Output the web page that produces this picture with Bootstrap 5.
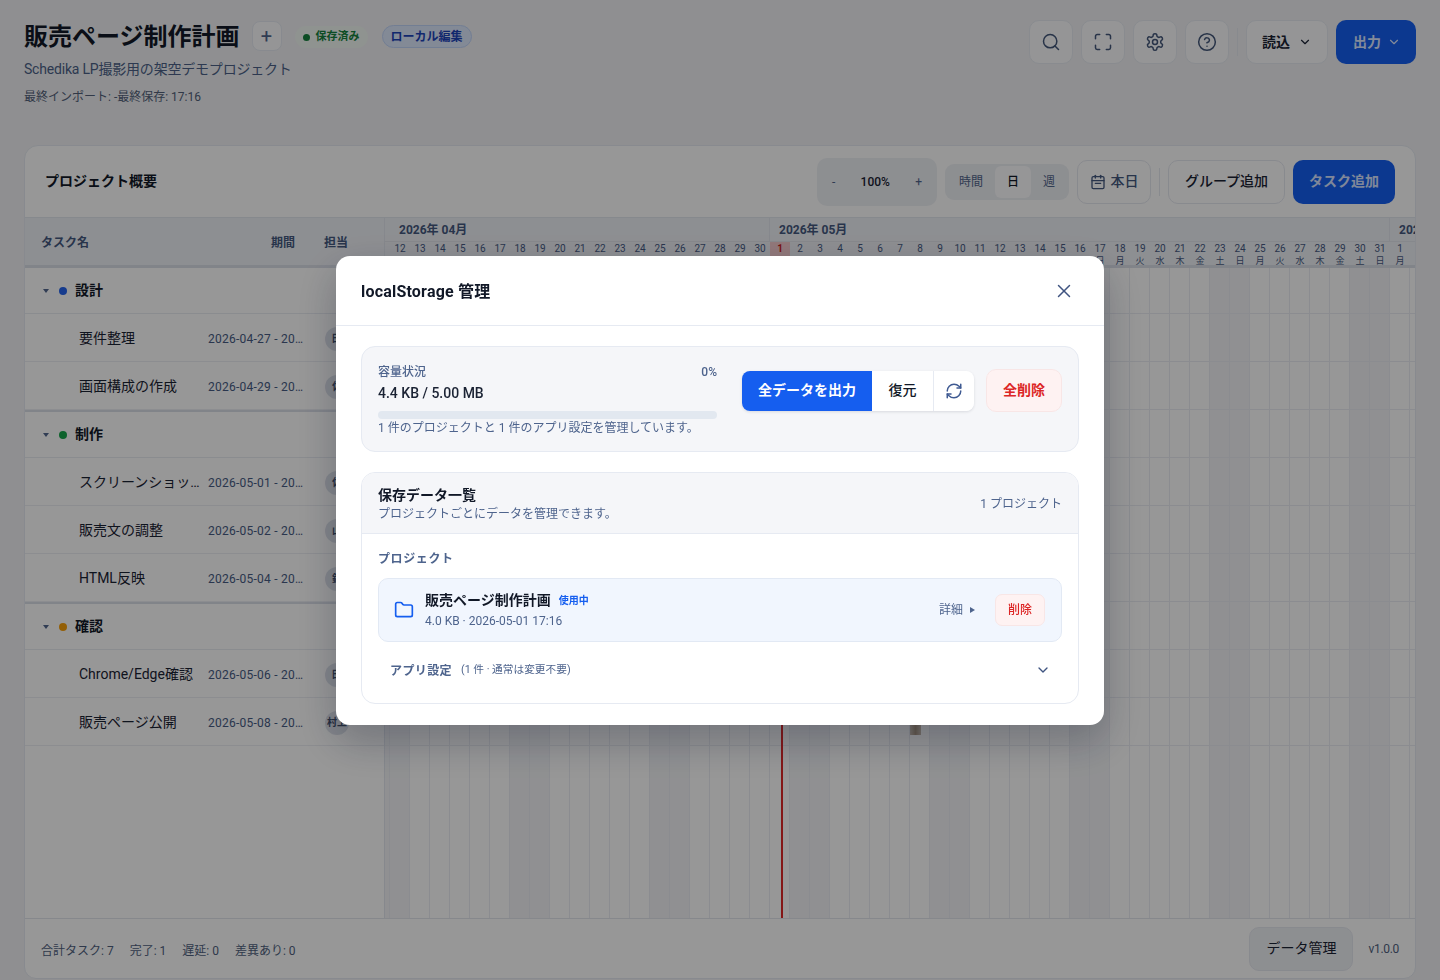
<!DOCTYPE html>
<html lang="ja">
<head>
<meta charset="UTF-8">
<meta name="viewport" content="width=device-width, initial-scale=1.0">
<title>販売ページ制作計画</title>
<link href="https://cdn.jsdelivr.net/npm/bootstrap@5.3.1/dist/css/bootstrap.min.css" rel="stylesheet">
<style>
    body {
        height: 100vh;
        overflow: hidden;
        background: #eeeff2;
        color: #111827;
        font-family: Roboto, "Noto Sans CJK JP", sans-serif;
    }
    svg.ico { fill: none; stroke: currentColor; stroke-width: 2; stroke-linecap: round; stroke-linejoin: round; flex: none; }

    /* page head */
    .page-wrap { height: 100vh; padding: 0 24px 1px; }
    .page-head { flex: 0 0 145px; padding-top: 19px; }
    .head-title-row { height: 34px; margin-top: 1px; }
    .page-title { font-size: 24px; font-weight: 700; line-height: 34px; margin: 0; }
    .add-tab { width: 30px; height: 30px; border: 1px solid #e3e7ef; border-radius: 8px; background: #f8f9fb; color: #51648a; font-size: 20px; line-height: 1; margin: 0 0 2px 12px; }
    .saved-pill { font-size: 11px; font-weight: 700; color: #15803d; padding: 3px 8px; margin-left: 13px; background: #eff5f1; border-radius: 12px; gap: 6px; }
    .saved-dot { width: 7px; height: 7px; border-radius: 50%; background: #15803d; }
    .local-pill { font-size: 12px; font-weight: 700; color: #1d44b8; background: #dbe6fb; border: 1px solid #bfd2f5; border-radius: 12px; padding: 2px 8px; margin: 0 0 2px 14px; height: 23px; line-height: 18px; }
    .page-sub { font-size: 14px; color: #4b5f86; line-height: 20px; margin-top: 5px; letter-spacing: -.2px; }
    .page-meta { font-size: 12px; color: #526078; line-height: 18px; margin-top: 9px; }
    .head-tools { margin-top: 1px; }
    .icon-btn { width: 44px; height: 44px; border: 1px solid #e5e8ef; border-radius: 10px; background: #f8f9fb; color: #435678; }
    .icon-btn svg.ico { stroke-width: 1.8; }
    .head-sep { width: 1px; height: 28px; background: #e3e6ed; }
    .head-btn { height: 44px; border-radius: 10px; font-size: 14px; font-weight: 700; padding: 0; gap: 8px; }
    .head-btn.plain { width: 82px; background: #f8f9fb; border: 1px solid #e5e8ef; color: #1a2233; }
    .head-btn.blue { width: 80px; background: #155eef; color: #dbe6ff; border: 0; gap: 6px; padding-left: 2px; }

    /* main card */
    .plan-card { border: 1px solid #e3e7ee; border-radius: 14px 14px 12px 12px; background: #fcfcfc; overflow: hidden; min-height: 0; }
    .plan-bar { height: 71px; padding: 0 20px; flex: none; }
    .plan-name { font-size: 14px; font-weight: 700; }
    .zoom-box { width: 120px; height: 48px; background: #eceef2; border-radius: 10px; font-size: 12px; color: #51648a; padding: 0 15px; }
    .zoom-box b { font-weight: 500; color: #1a2233; }
    .seg-box { width: 124px; height: 36px; background: #eceef2; border-radius: 9px; padding: 2px 0 2px 8px; font-size: 12px; color: #51648a; margin-left: 8px; gap: 6px; }
    .seg-box span { width: 36px; text-align: center; line-height: 32px; }
    .seg-box span:last-child { width: 24px; }
    .seg-box .on { background: #fafafc; border-radius: 6px; color: #111827; font-weight: 500; }
    .tool-btn { height: 44px; border: 1px solid #e3e6ed; border-radius: 10px; background: #fcfcfc; font-size: 14px; font-weight: 500; color: #1a2233; gap: 5px; }
    .tool-btn.today { width: 74px; color: #44587e; }
    .tool-btn.group { width: 117px; }
    .tool-sep { width: 1px; height: 28px; background: #e3e6ed; margin: 0 8px; }
    .blue-btn { height: 44px; width: 102px; border-radius: 10px; background: #155eef; color: #d6e2ff; font-size: 14px; font-weight: 700; margin-left: 8px; }

    /* left table */
    .plan-main { flex: 1; min-height: 0; border-top: 1px solid #e0e4ec; }
    .task-side { width: 360px; flex: none; border-right: 1px solid #dfe3eb; }
    .side-head { height: 50px; background: #eceef3; font-size: 12px; font-weight: 700; color: #44587e; border-bottom: 3px solid #d8dce5; padding: 3px 0 0 16px; }
    .side-head span:nth-child(1) { width: 230px; }
    .side-head span:nth-child(2) { width: 53px; }
    .row-group { height: 46px; padding-left: 18px; border-bottom: 1px solid #e6e9ef; font-size: 14px; font-weight: 700; }
    .row-group.next { height: 48px; border-top: 2px solid #d8dce5; }
    .group-caret { width: 0; height: 0; border-left: 3.5px solid transparent; border-right: 3.5px solid transparent; border-top: 4.5px solid #52668c; }
    .group-dot { width: 8px; height: 8px; border-radius: 50%; margin: 0 8px 0 10px; }
    .row-task { height: 48px; padding: 2px 0 0 54px; border-bottom: 1px solid #e9ebf0; }
    .task-name { width: 123px; font-size: 14px; color: #1a2233; }
    .task-date { width: 97px; margin-left: 6px; font-size: 12px; color: #465a82; letter-spacing: .25px; }
    .task-who { width: 24px; height: 24px; border-radius: 50%; background: #dbdfe7; color: #3e4d69; font-size: 10px; font-weight: 700; margin-left: 20px; white-space: nowrap; overflow: hidden; flex: none; }

    /* timeline */
    .time-side { flex: 1; min-width: 0; overflow: hidden; }
    .time-track { width: 1045px; margin-left: -15px; position: relative; height: 100%; }
    .month-row { height: 24px; background: #eceef3; border-bottom: 1px solid #e0e3ea; }
    .month-cell { height: 100%; font-size: 12px; font-weight: 700; color: #44587e; padding: 3px 0 0 9px; border-right: 1px solid #dfe3eb; white-space: nowrap; overflow: hidden; flex: none; }
    .month-cell.apr { width: 400px; padding-left: 29px; }
    .month-cell.may { width: 620px; }
    .month-cell.jun { width: 25px; border: 0; }
    .day-row { background: #eceef3; height: 26px; border-bottom: 3px solid #d8dce5; }
    .day-cell { width: 20px; flex: none; text-align: center; font-size: 10px; line-height: 14px; color: #465a82; }
    .day-cell i { display: block; font-style: normal; font-size: 9px; line-height: 9px; margin-top: 1px; }
    .day-cell u { display: block; text-decoration: none; }
    .day-cell.now u { background: #f3c9cc; color: #c81e1e; font-weight: 700; }
    .grid-area { height: 651px; position: relative; }
    .grid-col { width: 20px; flex: none; border-right: 1px solid #e8eaf0; }
    .grid-col.off { background: #f0f1f4; }
    .grid-lines { position: absolute; left: 0; right: 0; top: -2px; }
    .grid-lines div { height: 48px; border-bottom: 1px solid #e8eaf0; }
    .today-line { position: absolute; left: 411px; top: 0; bottom: 0; width: 2px; background: #dc2626; }
    .mini-bar { position: absolute; left: 540px; top: 455px; width: 11px; height: 12px; background: linear-gradient(90deg, #c9bdb0, #a8957f, #c9bdb0); }

    /* footer */
    .plan-foot { height: 60px; flex: none; border-top: 1px solid #dfe3ea; padding: 0 16px; font-size: 12px; color: #4f5f7d; }
    .foot-stats { padding-top: 4px; }
    .foot-ver { padding-top: 1px; letter-spacing: -.3px; }
    .foot-btn { height: 44px; width: 104px; margin-right: 15px; background: #eceef2; border: 1px solid #e3e6ed; border-radius: 10px; font-size: 14px; color: #1a2233; }

    /* storage dialog */
    .modal-backdrop.show { opacity: .4; }
    .store-dialog { max-width: 768px; }
    .store-dialog .modal-content { border: 0; border-radius: 14px; box-shadow: 0 16px 40px rgba(15, 23, 42, .28); }
    .store-dialog .modal-header { height: 70px; padding: 3px 25px 0; border-bottom: 1px solid #e6eaf2; }
    .store-title { font-size: 16px; font-weight: 700; margin: 0; letter-spacing: .2px; }
    .close-x { color: #3f5480; background: none; border: 0; padding: 0; margin: 0 4px 2px 0; }
    .close-x svg.ico { stroke-width: 1.6; }
    .store-dialog .modal-body { padding: 20px 25px 21px; }
    .quota-panel { height: 106px; background: #f5f6f9; border: 1px solid #e6eaf2; border-radius: 14px; padding: 0 16px; }
    .quota-left { width: 339px; padding-top: 2px; }
    .soft-text { color: #4e648d; font-size: 12px; }
    .quota-label { font-weight: 500; line-height: 18px; }
    .quota-size { font-size: 14px; font-weight: 500; line-height: 20px; margin-top: 2px; color: #1a2233; }
    .quota-track { height: 8px; background: #e2e8f0; border-radius: 4px; margin-top: 8px; }
    .quota-note { line-height: 16px; margin-top: 1px; }
    .act-group { height: 40px; border-radius: 8px; box-shadow: 0 1px 3px rgba(15, 23, 42, .12); margin: 0 0 16px 25px; overflow: hidden; }
    .act-group button { height: 40px; border: 0; font-size: 14px; font-weight: 700; background: #fff; padding: 0; }
    .act-export { width: 130px; background: #155eef !important; color: #fff; }
    .act-group .act-restore { width: 61px; color: #111827; font-weight: 500; }
    .act-sync { width: 41px; border-left: 1px solid #e6eaf2 !important; color: #3f5a92; }
    .act-clear { width: 76px; height: 43px; margin: 0 0 16px 12px; background: #fef2f2; border: 1px solid #f8e6e6; border-radius: 10px; color: #dc2626; font-size: 14px; font-weight: 700; }
    .saved-panel { margin-top: 20px; border: 1px solid #e6eaf2; border-radius: 14px; height: 232px; overflow: hidden; }
    .saved-top { height: 61px; background: #f5f6f9; border-bottom: 1px solid #e6eaf2; padding: 0 16px; }
    .saved-head { padding-top: 2px; }
    .saved-name { font-size: 14px; font-weight: 700; line-height: 18px; }
    .saved-hint { line-height: 16px; margin-top: 2px; }
    .saved-count { margin-top: 2px; }
    .saved-body { padding: 16px 16px 0; }
    .saved-cap { font-size: 12px; font-weight: 700; color: #4e648d; letter-spacing: .05em; line-height: 18px; }
    .proj-item { height: 64px; margin-top: 10px; background: #f1f6fe; border: 1px solid #e2e9f4; border-radius: 10px; padding: 0 16px 0 15px; }
    .proj-ico { color: #155eef; margin-right: 11px; }
    .proj-name { font-size: 14px; font-weight: 700; line-height: 18px; color: #111827; }
    .proj-live { font-size: 10px; font-weight: 700; color: #155eef; margin-left: 8px; }
    .proj-text { padding-top: 1px; }
    .proj-sub { line-height: 16px; margin-top: 4px; }
    .proj-more { font-size: 12px; color: #4e648d; margin-right: 20px; }
    .proj-more i { display: inline-block; width: 0; height: 0; border-top: 3px solid transparent; border-bottom: 3px solid transparent; border-left: 5px solid #4e648d; margin-left: 7px; vertical-align: 1px; }
    .proj-del { width: 50px; height: 32px; background: #fef2f2; border: 1px solid #f8e6e6; border-radius: 7px; color: #dc2626; font-size: 12px; font-weight: 500; }
    .app-row { padding: 20px 11px 0 12px; }
    .app-cap { font-size: 12px; font-weight: 700; color: #4e648d; letter-spacing: .4px; }
    .app-note { font-size: 10.7px; color: #4e648d; margin-left: 9px; }
    .app-arrow { color: #3f5480; margin-top: -2px; }
</style>
</head>
<body>
<svg width="0" height="0" class="position-absolute">
    <symbol id="i-search" viewBox="0 0 24 24"><circle cx="11" cy="11" r="8"/><path d="m21 21-4.3-4.3"/></symbol>
    <symbol id="i-full" viewBox="0 0 24 24"><path d="M8 3H5a2 2 0 0 0-2 2v3"/><path d="M21 8V5a2 2 0 0 0-2-2h-3"/><path d="M3 16v3a2 2 0 0 0 2 2h3"/><path d="M16 21h3a2 2 0 0 0 2-2v-3"/></symbol>
    <symbol id="i-gear" viewBox="0 0 24 24"><path d="M12.22 2h-.44a2 2 0 0 0-2 2v.18a2 2 0 0 1-1 1.73l-.43.25a2 2 0 0 1-2 0l-.15-.08a2 2 0 0 0-2.73.73l-.22.38a2 2 0 0 0 .73 2.73l.15.1a2 2 0 0 1 1 1.72v.51a2 2 0 0 1-1 1.74l-.15.09a2 2 0 0 0-.73 2.73l.22.38a2 2 0 0 0 2.73.73l.15-.08a2 2 0 0 1 2 0l.43.25a2 2 0 0 1 1 1.73V20a2 2 0 0 0 2 2h.44a2 2 0 0 0 2-2v-.18a2 2 0 0 1 1-1.73l.43-.25a2 2 0 0 1 2 0l.15.08a2 2 0 0 0 2.73-.73l.22-.39a2 2 0 0 0-.73-2.73l-.15-.08a2 2 0 0 1-1-1.74v-.5a2 2 0 0 1 1-1.74l.15-.09a2 2 0 0 0 .73-2.73l-.22-.38a2 2 0 0 0-2.73-.73l-.15.08a2 2 0 0 1-2 0l-.43-.25a2 2 0 0 1-1-1.73V4a2 2 0 0 0-2-2z"/><circle cx="12" cy="12" r="3"/></symbol>
    <symbol id="i-help" viewBox="0 0 24 24"><circle cx="12" cy="12" r="10"/><path d="M9.09 9a3 3 0 0 1 5.83 1c0 2-3 3-3 3"/><path d="M12 17h.01"/></symbol>
    <symbol id="i-down" viewBox="0 0 24 24"><path d="m6 9 6 6 6-6"/></symbol>
    <symbol id="i-cal" viewBox="0 0 24 24"><path d="M8 2v4"/><path d="M16 2v4"/><rect x="3" y="4" width="18" height="18" rx="2"/><path d="M3 10h18"/><path d="M8 14h8"/></symbol>
    <symbol id="i-x" viewBox="0 0 24 24"><path d="M18 6 6 18"/><path d="m6 6 12 12"/></symbol>
    <symbol id="i-sync" viewBox="0 0 24 24"><path d="M3 12a9 9 0 0 1 9-9 9.75 9.75 0 0 1 6.74 2.74L21 8"/><path d="M21 3v5h-5"/><path d="M21 12a9 9 0 0 1-9 9 9.75 9.75 0 0 1-6.74-2.74L3 16"/><path d="M8 16H3v5"/></symbol>
    <symbol id="i-folder" viewBox="0 0 24 24"><path d="M20 20a2 2 0 0 0 2-2V8a2 2 0 0 0-2-2h-7.9a2 2 0 0 1-1.69-.9L9.6 3.9A2 2 0 0 0 7.93 3H4a2 2 0 0 0-2 2v13a2 2 0 0 0 2 2Z"/></symbol>
</svg>

<div class="page-wrap d-flex flex-column">
    <header class="page-head d-flex justify-content-between">
        <div>
            <div class="head-title-row d-flex align-items-center">
                <h1 class="page-title">販売ページ制作計画</h1>
                <button class="add-tab d-flex align-items-center justify-content-center p-0">+</button>
                <span class="saved-pill d-inline-flex align-items-center"><span class="saved-dot"></span>保存済み</span>
                <span class="local-pill">ローカル編集</span>
            </div>
            <div class="page-sub">Schedika LP撮影用の架空デモプロジェクト</div>
            <div class="page-meta">最終インポート: -最終保存: 17:16</div>
        </div>
        <div class="head-tools d-flex align-items-start gap-2">
            <button class="icon-btn d-flex align-items-center justify-content-center p-0"><svg class="ico" width="20" height="20"><use href="#i-search"/></svg></button>
            <button class="icon-btn d-flex align-items-center justify-content-center p-0"><svg class="ico" width="20" height="20"><use href="#i-full"/></svg></button>
            <button class="icon-btn d-flex align-items-center justify-content-center p-0"><svg class="ico" width="20" height="20"><use href="#i-gear"/></svg></button>
            <button class="icon-btn d-flex align-items-center justify-content-center p-0"><svg class="ico" width="20" height="20"><use href="#i-help"/></svg></button>
            <span class="head-sep mt-2"></span>
            <button class="head-btn plain d-flex align-items-center justify-content-center">読込<svg class="ico" width="14" height="14"><use href="#i-down"/></svg></button>
            <button class="head-btn blue d-flex align-items-center justify-content-center">出力<svg class="ico" width="14" height="14"><use href="#i-down"/></svg></button>
        </div>
    </header>

    <section class="plan-card flex-grow-1 d-flex flex-column">
        <div class="plan-bar d-flex align-items-center">
            <div class="plan-name me-auto">プロジェクト概要</div>
            <div class="zoom-box d-flex align-items-center justify-content-between"><span>-</span><b>100%</b><span>+</span></div>
            <div class="seg-box d-flex align-items-center"><span>時間</span><span class="on">日</span><span>週</span></div>
            <button class="tool-btn today d-flex align-items-center justify-content-center px-0 ms-2"><svg class="ico" width="16" height="16"><use href="#i-cal"/></svg>本日</button>
            <span class="tool-sep"></span>
            <button class="tool-btn group">グループ追加</button>
            <button class="blue-btn border-0 p-0">タスク追加</button>
        </div>

        <div class="plan-main d-flex">
            <div class="task-side" id="taskSide">
                <div class="side-head d-flex align-items-center"><span>タスク名</span><span>期間</span><span>担当</span></div>
            </div>
            <div class="time-side">
                <div class="time-track" id="timeTrack"></div>
            </div>
        </div>

        <footer class="plan-foot d-flex align-items-center">
            <div class="foot-stats d-flex gap-3 me-auto"><span>合計タスク: 7</span><span>完了: 1</span><span>遅延: 0</span><span>差異あり: 0</span></div>
            <button class="foot-btn">データ管理</button>
            <span class="foot-ver">v1.0.0</span>
        </footer>
    </section>
</div>

<div class="modal-backdrop show"></div>
<div class="modal d-block" tabindex="-1">
    <div class="modal-dialog modal-dialog-centered store-dialog">
        <div class="modal-content">
            <div class="modal-header d-flex justify-content-between">
                <h5 class="store-title">localStorage 管理</h5>
                <button class="close-x d-flex"><svg class="ico" width="22" height="22"><use href="#i-x"/></svg></button>
            </div>
            <div class="modal-body">
                <div class="quota-panel d-flex align-items-center">
                    <div class="quota-left">
                        <div class="d-flex justify-content-between soft-text quota-label"><span>容量状況</span><span>0%</span></div>
                        <div class="quota-size">4.4 KB / 5.00 MB</div>
                        <div class="quota-track"></div>
                        <div class="soft-text quota-note">1 件のプロジェクトと 1 件のアプリ設定を管理しています。</div>
                    </div>
                    <div class="act-group d-flex">
                        <button class="act-export">全データを出力</button>
                        <button class="act-restore">復元</button>
                        <button class="act-sync d-flex align-items-center justify-content-center"><svg class="ico" width="18" height="18"><use href="#i-sync"/></svg></button>
                    </div>
                    <button class="act-clear p-0">全削除</button>
                </div>

                <div class="saved-panel">
                    <div class="saved-top d-flex align-items-center justify-content-between">
                        <div class="saved-head">
                            <div class="saved-name">保存データ一覧</div>
                            <div class="soft-text saved-hint">プロジェクトごとにデータを管理できます。</div>
                        </div>
                        <span class="soft-text saved-count">1 プロジェクト</span>
                    </div>
                    <div class="saved-body">
                        <div class="saved-cap">プロジェクト</div>
                        <div class="proj-item d-flex align-items-center">
                            <svg class="ico proj-ico" width="20" height="20"><use href="#i-folder"/></svg>
                            <div class="proj-text me-auto">
                                <div class="d-flex align-items-center"><span class="proj-name">販売ページ制作計画</span><span class="proj-live">使用中</span></div>
                                <div class="soft-text proj-sub">4.0 KB · 2026-05-01 17:16</div>
                            </div>
                            <span class="proj-more">詳細<i></i></span>
                            <button class="proj-del p-0">削除</button>
                        </div>
                        <div class="app-row d-flex align-items-center">
                            <span class="app-cap">アプリ設定</span>
                            <span class="app-note me-auto">(1 件 · 通常は変更不要)</span>
                            <svg class="ico app-arrow" width="16" height="16"><use href="#i-down"/></svg>
                        </div>
                    </div>
                </div>
            </div>
        </div>
    </div>
</div>

<script src="https://cdn.jsdelivr.net/npm/bootstrap@5.3.1/dist/js/bootstrap.bundle.min.js"></script>
<script>
    // Task table
    const groups = [
        { name: "設計", color: "#2563eb", tasks: [["要件整理", "2026-04-27 - 2026-04-30", "田"], ["画面構成の作成", "2026-04-29 - 2026-05-01", "佐"]] },
        { name: "制作", color: "#16a34a", tasks: [["スクリーンショット撮影", "2026-05-01 - 2026-05-03", "佐"], ["販売文の調整", "2026-05-02 - 2026-05-05", "山"], ["HTML反映", "2026-05-04 - 2026-05-07", "鈴"]] },
        { name: "確認", color: "#f59e0b", tasks: [["Chrome/Edge確認", "2026-05-06 - 2026-05-07", "田"], ["販売ページ公開", "2026-05-08 - 2026-05-08", "村上"]] },
    ];
    const taskSide = document.getElementById("taskSide");
    groups.forEach((g, i) => {
        let html = `<div class="row-group d-flex align-items-center ${i ? "next" : ""}"><span class="group-caret"></span><span class="group-dot" style="background:${g.color}"></span>${g.name}</div>`;
        g.tasks.forEach(t => {
            html += `<div class="row-task d-flex align-items-center"><span class="task-name text-truncate">${t[0]}</span><span class="task-date text-truncate">${t[1]}</span><span class="task-who d-flex align-items-center justify-content-center">${t[2]}</span></div>`;
        });
        taskSide.insertAdjacentHTML("beforeend", html);
    });

    // Timeline: 2026-04-11 onward, 20px a day
    const weekdays = ["日", "月", "火", "水", "木", "金", "土"];
    const days = [];
    for (let d = new Date(2026, 3, 11); days.length < 52; d.setDate(d.getDate() + 1)) days.push(new Date(d));
    const isNow = d => d.getMonth() === 4 && d.getDate() === 1;
    const track = document.getElementById("timeTrack");
    track.innerHTML = `
        <div class="month-row d-flex">
            <div class="month-cell apr">2026年 04月</div>
            <div class="month-cell may">2026年 05月</div>
            <div class="month-cell jun">2026年 06月</div>
        </div>
        <div class="day-row d-flex">${days.map(d => `<div class="day-cell ${isNow(d) ? "now" : ""}"><u>${d.getDate()}</u><i>${weekdays[d.getDay()]}</i></div>`).join("")}</div>
        <div class="grid-area">
            <div class="d-flex h-100">${days.map(d => `<div class="grid-col ${d.getDay() % 6 === 0 ? "off" : ""}"></div>`).join("")}</div>
            <div class="grid-lines">${"<div></div>".repeat(10)}</div>
            <span class="today-line"></span>
            <span class="mini-bar"></span>
        </div>`;
</script>
</body>
</html>
